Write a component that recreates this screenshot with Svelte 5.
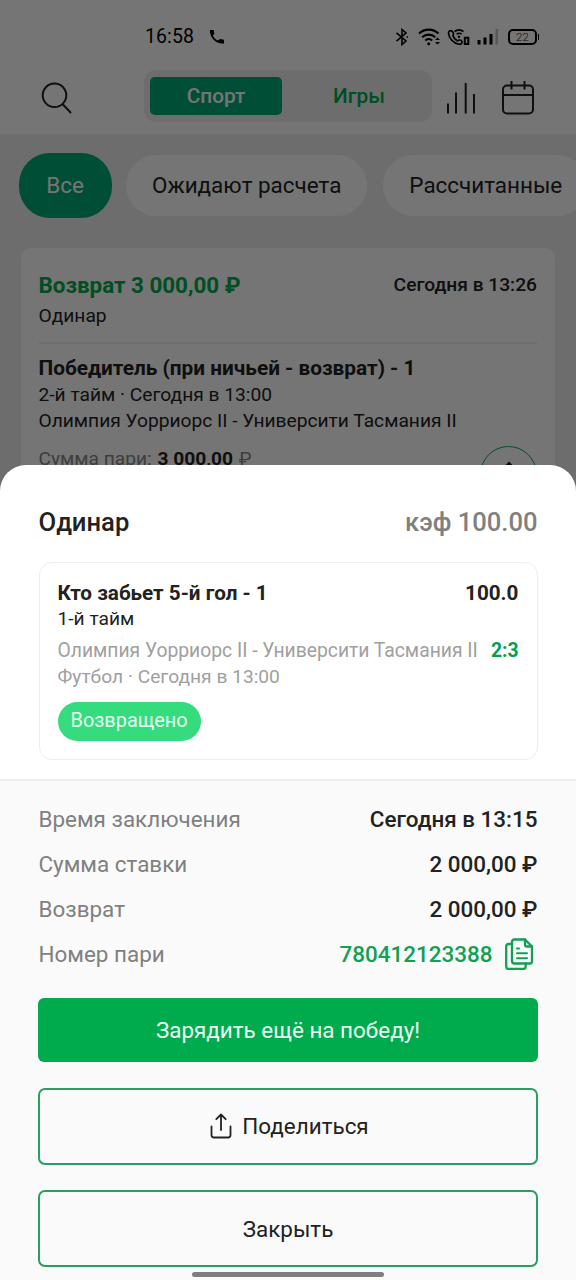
<script>
    let tab = $state("Спорт");
    let filter = $state("Все");

    const tabs = ["Спорт", "Игры"];
    const filters = ["Все", "Ожидают расчета", "Рассчитанные"];

    const details = [
        {label: "Время заключения", value: "Сегодня в 13:15"},
        {label: "Сумма ставки", value: "2 000,00 ₽"},
        {label: "Возврат", value: "2 000,00 ₽"}
    ];
    const betNumber = "780412123388";
</script>

<div class="phone">
    <div class="page">
        <header>
            <div class="status">
                <span class="clock">16:58</span>
                <svg class="call" width="16" height="16" viewBox="0 0 16 16">
                    <path d="M1 1h3.600l.8 3.800-1.600 2c1.200 2.200 2.800 3.800 5.200 4.800l1.900-1.700 4.100.9v3.700C7.500 15.500.5 9 1 1z" fill="#000"/>
                </svg>
                <svg class="bt" width="14" height="18" viewBox="0 0 14 18" fill="none" stroke="#000" stroke-width="1.600">
                    <path d="M1.500 4.800l9.500 8.200L7 16.500v-15L11 5l-9.500 8.200"/>
                    <path d="M11.500 9h1.500"/>
                </svg>
                <svg class="wifi" width="24" height="18" viewBox="0 0 24 18" fill="none" stroke="#000" stroke-width="2.200">
                    <path d="M1 5.500a14 14 0 0 1 19.500 0M4.200 9.200a9.300 9.300 0 0 1 13 0M7.300 12.500a5 5 0 0 1 6.800 0"/>
                    <circle cx="10.700" cy="15.700" r="1.500" fill="#000" stroke="none"/>
                    <path d="M17 12l2.500-2.500L22 12zM17 14l2.500 2.500L22 14z" fill="#000" stroke="none"/>
                </svg>
                <svg class="vowifi" width="24" height="18" viewBox="0 0 24 18" fill="none" stroke="#000" stroke-width="1.600">
                    <path d="M4.800 3c-1.800-1-3.500.4-3.300 2.400.5 5.200 5 9.800 10.300 10.800 2 .4 3.700-1 3.200-2.800-1-1.500-3-2-4.300-.5-2-.8-3.800-3-4.800-5.300C7 6.300 6.500 4 4.800 3z"/>
                    <path d="M7.500 3.500a7.500 7.500 0 0 1 9 0M9.500 6.200a4.500 4.500 0 0 1 5.200 0"/>
                    <circle cx="12" cy="8.700" r="1.200" fill="#000" stroke="none"/>
                    <path d="M17.800 9.800h3.500v6.200h-3.500z" stroke-width="2"/>
                </svg>
                <svg class="signal" width="22" height="18" viewBox="0 0 22 18">
                    <path d="M.5 12h3v4.500h-3zM6.500 9.500h3v7h-3zM12.500 6h3v10.500h-3z" fill="#000"/>
                    <path d="M18.500 1h2.500v15.500h-2.500z" fill="#000" opacity=".25"/>
                </svg>
                <div class="battery">22</div>
            </div>

            <div class="toolbar">
                <svg class="search" width="32" height="32" viewBox="0 0 32 32" fill="none" stroke="#222" stroke-width="2">
                    <circle cx="13.500" cy="13.300" r="11.800"/>
                    <path d="M21.500 22l8.500 9"/>
                </svg>
                <div class="tabs">
                    {#each tabs as name}
                        <button class="tab" class:active={tab === name} onclick={() => tab = name}>{name}</button>
                    {/each}
                </div>
                <svg class="chart" width="30" height="32" viewBox="0 0 30 32" stroke="#222" stroke-width="2">
                    <path d="M2 21.500V31.500M10 10.500V31.500M19.700 1V31.500M28 12V31.500"/>
                </svg>
                <svg class="calendar" width="32" height="34" viewBox="0 0 32 34" fill="none" stroke="#222" stroke-width="2">
                    <rect x="1" y="4.500" width="30" height="28" rx="4"/>
                    <path d="M1 14h30M9.500 0v8.500M22.500 0v8.500"/>
                </svg>
            </div>
        </header>

        <div class="filters">
            {#each filters as name}
                <button class="pill" class:active={filter === name} onclick={() => filter = name}>{name}</button>
            {/each}
        </div>

        <section class="bet">
            <div class="bet-head">
                <strong class="refund">Возврат 3 000,00 ₽</strong>
                <span class="date">Сегодня в 13:26</span>
            </div>
            <p class="kind">Одинар</p>
            <hr/>
            <p class="market">Победитель (при ничьей - возврат) - 1</p>
            <p class="line">2-й тайм · Сегодня в 13:00</p>
            <p class="line">Олимпия Уорриорс II - Университи Тасмания II</p>
            <div class="bet-foot">
                <span class="stake">Сумма пари: <b>3 000,00</b> ₽</span>
                <div class="share-round">
                    <svg width="24" height="28" viewBox="0 0 24 28" fill="none" stroke="#222" stroke-width="2">
                        <path d="M12 17V2M7 7l5-5 5 5M2 13v12h20V13"/>
                    </svg>
                </div>
            </div>
        </section>
    </div>

    <div class="shade"></div>

    <div class="sheet">
        <div class="top">
            <div class="sheet-head">
                <span>Одинар</span>
                <span class="coef">кэф 100.00</span>
            </div>
            <div class="event">
                <div class="row title"><span>Кто забьет 5-й гол - 1</span><span class="odd">100.0</span></div>
                <div class="half">1-й тайм</div>
                <div class="row teams"><span>Олимпия Уорриорс II - Университи Тасмания II</span><b>2:3</b></div>
                <div class="sport">Футбол · Сегодня в 13:00</div>
                <span class="badge">Возвращено</span>
            </div>
        </div>

        <div class="bottom">
            {#each details as item}
                <div class="detail">
                    <span>{item.label}</span>
                    <span class="value">{item.value}</span>
                </div>
            {/each}
            <div class="detail">
                <span>Номер пари</span>
                <span class="value number">
                    {betNumber}
                    <svg width="30" height="32" viewBox="0 0 30 32" fill="none" stroke="#12a052" stroke-width="2.300" stroke-linejoin="round" stroke-linecap="round">
                        <path d="M9.500 1.500h10.500l7 7v15q0 2-2 2H9.500q-2.500 0-2.500-2.500V4q0-2.500 2.500-2.500z"/>
                        <path d="M20 1.500v5q0 2 2 2h5"/>
                        <path d="M7 6H3.700Q1.200 6 1.200 8.500V28.500q0 2.500 2.500 2.500h14.500q2.500 0 2.500-2.500v-3"/>
                        <path d="M12 10.500h2M12 15.300h10M12 20.300h10" stroke-width="2"/>
                    </svg>
                </span>
            </div>

            <button class="btn primary">Зарядить ещё на победу!</button>
            <button class="btn outline share">
                <svg width="22" height="26" viewBox="0 0 22 26" fill="none" stroke="#222" stroke-width="1.800" stroke-linecap="round" stroke-linejoin="round">
                    <path d="M11 17V1.500M6.300 6.200L11 1.500l4.700 4.700"/>
                    <path d="M1.500 13.500v8.500q0 2.500 2.500 2.500h14q2.500 0 2.500-2.500v-8.500"/>
                </svg>
                Поделиться
            </button>
            <button class="btn outline">Закрыть</button>
            <div class="home"></div>
        </div>
    </div>
</div>

<style>
    :global(body) {
        margin: 0;
        background: #fafafa;
    }

    .phone {
        position: relative;
        width: 576px;
        height: 1280px;
        overflow: hidden;
        font-family: Roboto, "Noto Sans", sans-serif;
        color: #222;
    }

    .phone * {
        box-sizing: border-box;
    }

    button {
        border: 0;
        padding: 0;
        font: inherit;
        color: inherit;
        background: none;
    }

    p {
        margin: 0;
    }

    svg {
        display: block;
        flex: none;
    }

    .page {
        height: 100%;
        background: #eee;
    }

    header {
        height: 134px;
        background: #fff;
    }

    .status {
        display: flex;
        align-items: center;
        height: 70px;
        padding: 4px 39px 0 145px;
    }

    .clock {
        color: #000;
        font-size: 19.500px;
        letter-spacing: .1px;
        line-height: 24px;
    }

    .call {
        margin-left: 15px;
    }

    .bt {
        margin-left: auto;
    }

    .wifi {
        margin-left: 9px;
    }

    .vowifi {
        margin-left: 5px;
    }

    .signal {
        margin-left: 6px;
    }

    .battery {
        position: relative;
        width: 29px;
        height: 16px;
        margin-left: 9px;
        border: 2px solid #000;
        border-radius: 5px;
        font-size: 11.500px;
        font-weight: 300;
        line-height: 13px;
        text-align: center;
    }

    .battery::after {
        content: "";
        position: absolute;
        right: -4px;
        top: 3px;
        width: 1px;
        height: 6px;
        background: #000;
    }

    .toolbar {
        display: flex;
        align-items: center;
        height: 52px;
        padding-left: 41px;
    }

    .search {
        margin-top: 4px;
    }

    .tabs {
        display: flex;
        width: 288px;
        height: 52px;
        margin-left: 71px;
        padding: 7px 6px;
        background: #eee;
        border-radius: 12px;
    }

    .tab {
        width: 132px;
        padding-bottom: 1px;
        border-radius: 5px;
        font-size: 20.800px;
        font-weight: 500;
        color: #00ab4e;
    }

    .tab + .tab {
        width: 144px;
        padding-left: 10px;
    }

    .tab.active {
        background: #00aa75;
        color: #fff;
    }

    .chart {
        margin: 4px 0 0 14px;
    }

    .calendar {
        margin: 3px 0 0 26px;
    }

    .filters {
        display: flex;
        align-items: center;
        height: 65px;
        margin-top: 19px;
        padding-left: 19px;
    }

    .pill {
        flex: none;
        height: 61px;
        margin-right: 16px;
        padding: 0 26px 1px;
        border-radius: 31px;
        background: #fff;
        font-size: 22.450px;
    }

    .pill.active {
        width: 93px;
        height: 65px;
        margin-right: 14px;
        padding-left: 25px;
        background: #00aa75;
        color: #fff;
    }

    .bet {
        margin: 30px 21px 0;
        padding: 21px 18px 0 17.500px;
        height: 330px;
        border-radius: 10px;
        background: #fff;
        font-size: 19.200px;
        line-height: 26px;
    }

    .bet-head {
        display: flex;
        justify-content: space-between;
        align-items: center;
        height: 32px;
    }

    .refund {
        font-size: 22.400px;
        color: #00ab4e;
    }

    .date {
        font-weight: 500;
    }

    .kind {
        padding-top: 2px;
    }

    hr {
        margin: 13px 0 11px;
        border: 0;
        border-top: 2px solid #eee;
    }

    .market {
        font-weight: 700;
        font-size: 20.800px;
    }

    .line {
        position: relative;
        top: 1px;
    }

    .bet-foot {
        display: flex;
        justify-content: space-between;
        margin-top: 13px;
        color: #888;
    }

    .bet-foot b {
        margin: 0 1px;
        color: #222;
    }

    .share-round {
        display: grid;
        place-items: center;
        width: 57px;
        height: 57px;
        border: 1.500px solid #00ab4e;
        border-radius: 50%;
    }

    .shade {
        position: absolute;
        inset: 0;
        background: rgba(0, 0, 0, .54);
    }

    .sheet {
        position: absolute;
        left: 0;
        right: 0;
        top: 465px;
        bottom: 0;
        border-radius: 26px 26px 0 0;
        background: #fff;
        overflow: hidden;
    }

    .top {
        height: 316px;
        padding: 38px 38.500px 0;
        border-bottom: 2px solid #ededed;
    }

    .sheet-head {
        display: flex;
        justify-content: space-between;
        font-size: 25.600px;
        font-weight: 500;
        line-height: 38px;
    }

    .coef {
        color: #808080;
    }

    .event {
        height: 198px;
        margin-top: 21px;
        padding: 17px 18px;
        border: 1.500px solid #ededed;
        border-radius: 13px;
        font-size: 19.200px;
        line-height: 26px;
    }

    .row {
        display: flex;
        justify-content: space-between;
    }

    .title {
        font-size: 20.700px;
        font-weight: 700;
    }

    .teams,
    .sport {
        color: #a0a0a0;
    }

    .teams {
        margin-top: 6px;
        font-size: 19.300px;
    }

    .teams b {
        color: #00a04e;
    }

    .badge {
        display: inline-block;
        height: 39px;
        margin-top: 12px;
        padding: 0 13px;
        border-radius: 20px;
        background: #34dc7d;
        color: #e9fff2;
        font-size: 19.900px;
        line-height: 38px;
    }

    .bottom {
        height: 499px;
        padding: 15px 38px 0;
        background: #fafafa;
    }

    .detail {
        display: flex;
        justify-content: space-between;
        align-items: center;
        height: 45px;
        padding: 0 .5px;
        font-size: 22.450px;
        color: #808080;
    }

    .value {
        font-weight: 500;
        color: #222;
    }

    .number {
        display: flex;
        align-items: center;
        gap: 12px;
        padding-right: 3px;
        color: #12a052;
    }

    .btn {
        display: flex;
        align-items: center;
        justify-content: center;
        gap: 10px;
        width: 500px;
        font-size: 22.450px;
    }

    .primary {
        height: 64px;
        margin-top: 22px;
        border-radius: 6px;
        background: #00ab4e;
        color: #eafff2;
    }

    .outline {
        height: 77px;
        margin-top: 26px;
        border: 2px solid #28a061;
        border-radius: 7px;
    }

    .share {
        padding: 0 0 1px 3px;
    }

    .outline + .outline {
        margin-top: 25px;
    }

    .home {
        width: 192px;
        height: 5px;
        margin: 5px auto 0;
        border-radius: 3px;
        background: #807f80;
    }
</style>
